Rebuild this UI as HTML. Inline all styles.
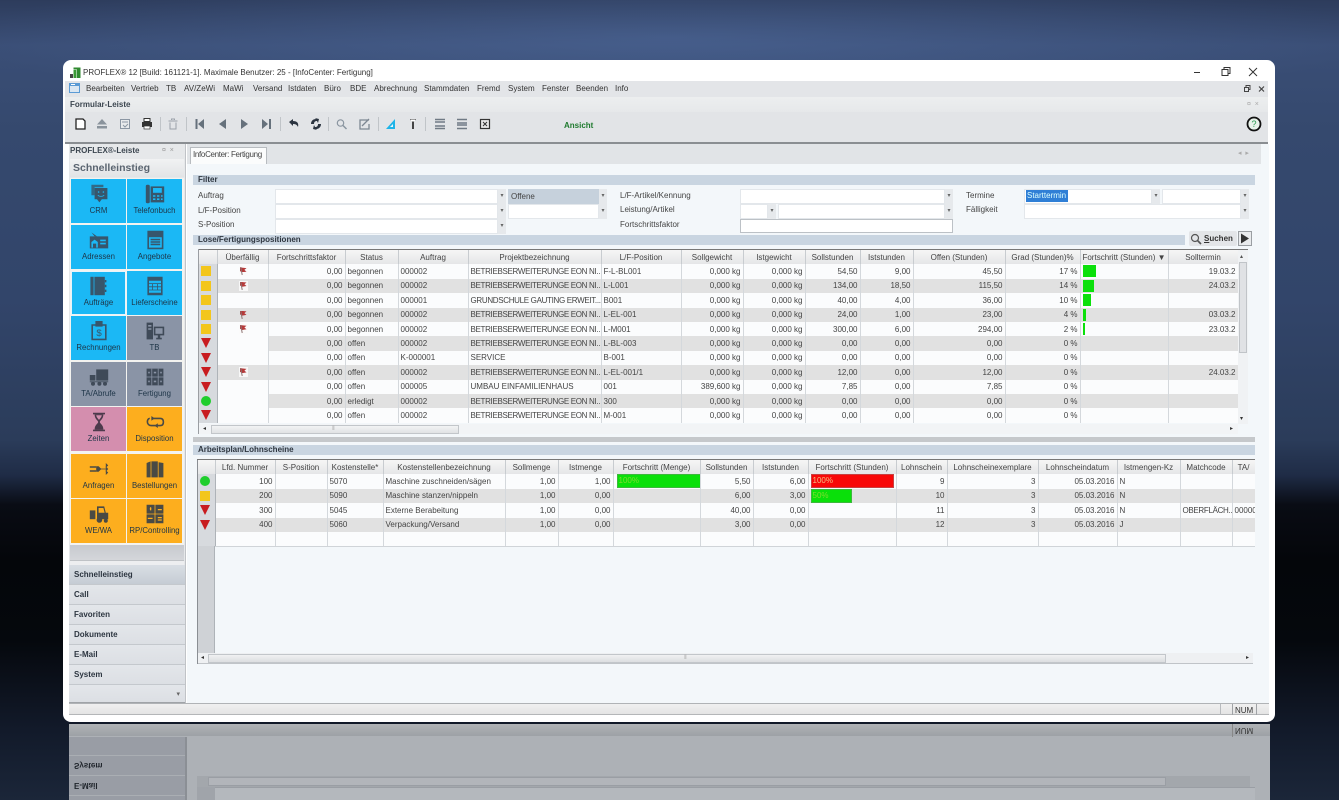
<!DOCTYPE html>
<html lang="de"><head><meta charset="utf-8"><title>PROFLEX InfoCenter</title>
<style>
*{box-sizing:border-box}
html,body{margin:0;padding:0;width:1339px;height:800px;overflow:hidden}
html{background:#05080d}
body{position:relative;font-family:"Liberation Sans",sans-serif;font-size:8px;color:#333;
background:radial-gradient(ellipse 720px 70px at 50% 38px,rgba(90,120,175,.38),rgba(90,120,175,0)),linear-gradient(180deg,#2d3c5c 0,#3a4e76 45px,#35496e 130px,#32456a 300px,#2b3c5a 440px,#1f2c46 475px,#090c14 505px,#04060a 560px,#05080d 640px,#121a2a 730px,#1b2639 800px)}
#all{position:absolute;left:0;top:0;width:1339px;height:800px;overflow:hidden;filter:blur(.35px)}
.a{position:absolute}
.t{position:absolute;white-space:nowrap;line-height:10px}
#win{position:absolute;left:63px;top:60px;width:1212px;height:662px;background:#fff;border-radius:8px;overflow:hidden}
.bar{position:absolute;background:#c9d5e1;height:10px}
.lb{position:absolute;color:#444;font-size:8px;line-height:10px;white-space:nowrap}
.f{position:absolute;background:#fff;border:1px solid #e3e7eb;height:15px;font-size:8px;line-height:13px;padding-left:2px;color:#444}
.dd{position:absolute;width:8px;height:15px;background:#e6e9ec;color:#666;font-size:6px;line-height:14px;text-align:center}
.tile{position:absolute;width:55px;height:44px;text-align:center;font-size:7.8px;color:#1d3447;line-height:9px}
.tile svg{position:absolute;left:17.5px;top:5px;width:20px;height:20px}
.tile span{position:absolute;left:-2px;right:-2px;top:27px;white-space:nowrap}
.c{background:#1bb8f5}.g{background:#8a94a6}.p{background:#d48eae}.o{background:#fdae1e}
.nav{position:absolute;left:69px;width:116px;height:20px;background:linear-gradient(#e3e6ea,#dcdfe4);border-bottom:1px solid #c4c8cd;font-weight:bold;font-size:8px;line-height:19px;padding-left:5px;color:#2c3540}
table{position:absolute;border-collapse:collapse;table-layout:fixed;font-size:8px;color:#444}
td,th{padding:0 2px;overflow:hidden;white-space:nowrap;border-right:1px solid #d4d8dc;height:14.4px;line-height:13px;font-weight:normal}
th{background:linear-gradient(#f6f6f6,#e5e6e8);color:#444;text-align:center;border-right:1px solid #c8ccd0;padding:0 1px}
tr.x td{background:#e1e1e1}
tr.y td{background:#fbfcfd}
td.r{text-align:right}
td.h,tr.x td.h,tr.y td.h{background:#d7dade;padding:0;position:relative;border-right:1px solid #aeb3b8}
td.pb,th.pb{position:relative}
.sq,.ci,.tr{position:absolute;left:2px;top:2px}
.sq{width:10px;height:10px;background:#f3c61c}
.ci{width:10px;height:10px;background:#1fce2d;border-radius:50%}
.tr{width:0;height:0;border-left:5px solid transparent;border-right:5px solid transparent;border-top:10px solid #c81c20}
.fl{position:absolute;left:21px;top:2px;width:9px;height:10px;background:rgba(250,250,250,.85)}
.fl i{position:absolute;left:1px;top:1px;width:7px;height:5px;background:#b53a3a;clip-path:polygon(0 0,100% 15%,70% 50%,100% 85%,40% 100%,0 70%)}
.fl b{position:absolute;left:2px;top:1px;width:1px;height:8px;background:#8a7070;transform:rotate(-10deg)}
tr.w0 td.ue{background:#fbfcfd}
.gb{position:absolute;left:2px;top:1px;height:12px;background:#0be00b}
.vbg{position:absolute;top:0;height:14px;background:#0ae00a;border:1px solid #3cb83c;color:#7fdc30;padding-left:1px;line-height:12px;font-size:8px}
.n{letter-spacing:-.32px}
</style></head><body><div id="all">

<!-- reflection -->
<div class="a" style="left:69px;top:724px;width:1201px;height:76px;background:#adb1b6"></div>
<div class="a" style="left:69px;top:724px;width:1201px;height:12px;background:linear-gradient(#b0b3b6,#9da1a6)"></div>
<div class="a" style="left:69px;top:737px;width:116px;height:63px;background:#999da5"></div>
<div class="a" style="left:185px;top:737px;width:2px;height:63px;background:#8b8f95"></div>
<div class="a" style="left:69px;top:755px;width:116px;height:1px;background:#aaaeb3"></div>
<div class="a" style="left:69px;top:775px;width:116px;height:1px;background:#aaaeb3"></div>
<div class="a" style="left:69px;top:795px;width:116px;height:1px;background:#aaaeb3"></div>
<div class="t" style="left:74px;top:760px;font-weight:bold;color:#20252c;transform:scaleY(-1)">System</div>
<div class="t" style="left:74px;top:780px;font-weight:bold;color:#20252c;transform:scaleY(-1)">E-Mail</div>
<div class="t" style="left:1235px;top:725px;color:#333;transform:scaleY(-1)">NUM</div>
<div class="a" style="left:1232px;top:724px;width:1px;height:13px;background:#888"></div>
<div class="a" style="left:197px;top:776px;width:1053px;height:11px;background:#a3a7ac"></div>
<div class="a" style="left:208px;top:777px;width:958px;height:9px;background:#b2b5ba;border:1px solid #9a9ea4"></div>
<div class="a" style="left:197px;top:787px;width:18px;height:13px;background:#a0a4aa"></div>
<div class="a" style="left:215px;top:787px;width:1040px;height:13px;background:#b4b8bd;border-top:1px solid #9a9ea4"></div>

<div id="win"></div>
<!-- title -->
<svg class="a" style="left:70px;top:67px" width="11" height="11" viewBox="0 0 11 11"><rect x="0" y="7" width="3" height="4" fill="#444"/><rect x="3.5" y="3" width="3" height="8" fill="#3a9a35"/><rect x="7" y="0.5" width="3.5" height="10.5" fill="#2f8a2f"/><rect x="3.5" y="0.5" width="7" height="2" fill="#2f8a2f"/></svg>
<div class="t" style="left:83px;top:68px;color:#333">PROFLEX® 12 [Build: 161121-1]. Maximale Benutzer: 25 - [InfoCenter: Fertigung]</div>
<svg class="a" style="left:1191px;top:66px" width="72" height="12" viewBox="0 0 72 12" fill="none" stroke="#333" stroke-width="1"><path d="M3 6.5h6"/><rect x="31" y="3.5" width="6" height="6"/><path d="M33 3.5V1.5h6v6h-2"/><path d="M58 2l8 8M66 2l-8 8"/></svg>
<!-- menu -->
<div class="a" style="left:65px;top:81px;width:1203px;height:16px;background:#e3e5e8"></div>
<svg class="a" style="left:69px;top:83px" width="11" height="10"><rect width="11" height="10" fill="#5b9bd5"/><rect x="1" y="3" width="9" height="6" fill="#dbe7f2"/><rect x="2" y="1" width="4" height="1" fill="#fff"/></svg>
<div class="t" style="left:86px;top:84px">Bearbeiten</div><div class="t" style="left:131px;top:84px">Vertrieb</div><div class="t" style="left:166px;top:84px">TB</div><div class="t" style="left:184px;top:84px">AV/ZeWi</div><div class="t" style="left:223px;top:84px">MaWi</div><div class="t" style="left:253px;top:84px">Versand</div><div class="t" style="left:288px;top:84px">Istdaten</div><div class="t" style="left:324px;top:84px">Büro</div><div class="t" style="left:350px;top:84px">BDE</div><div class="t" style="left:374px;top:84px">Abrechnung</div><div class="t" style="left:424px;top:84px">Stammdaten</div><div class="t" style="left:477px;top:84px">Fremd</div><div class="t" style="left:508px;top:84px">System</div><div class="t" style="left:542px;top:84px">Fenster</div><div class="t" style="left:576px;top:84px">Beenden</div><div class="t" style="left:615px;top:84px">Info</div>
<svg class="a" style="left:1242px;top:84px" width="24" height="10" fill="none" stroke="#444"><rect x="2.5" y="3.5" width="4" height="4"/><path d="M4 3.5V1.5h4v4H6.500"/><path d="M17 2.500l5 5M22 2.500l-5 5" stroke-width="1.200"/></svg>
<!-- formular -->
<div class="a" style="left:65px;top:97px;width:1203px;height:15px;background:linear-gradient(#eceeef,#e6e8ea)"></div>
<div class="t" style="left:70px;top:100px;font-weight:bold;color:#3c4650">Formular-Leiste</div>
<div class="t" style="left:1247px;top:100px;color:#aaa;font-size:7px">¤ &nbsp;×</div>
<!-- toolbar -->
<div class="a" style="left:65px;top:112px;width:1203px;height:30px;background:#e2e4e7"></div>
<div class="a" style="left:65px;top:142px;width:1203px;height:2px;background:#8a8e92"></div>
<svg class="a" style="left:63px;top:112px" width="520" height="28" viewBox="63 112 520 28">
<path d="M76 119h7l2 2v8h-9z" fill="#fff" stroke="#222" stroke-width="1.300"/>
<path d="M102 119l5 5.500H97z" fill="#8a939c"/><rect x="97" y="126" width="10" height="2.500" fill="#8a939c"/>
<rect x="120.500" y="119.500" width="9" height="9" fill="#e8eaec" stroke="#8b96a3"/><path d="M122 122h6M123 125l2 2 3-3" stroke="#8b96a3" fill="none"/>
<path d="M144 118.500h6v3h-6z" fill="#fff" stroke="#333"/><rect x="142" y="122" width="10" height="5" fill="#333"/><rect x="144" y="126" width="6" height="3" fill="#fff" stroke="#333" stroke-width=".7"/>
<path d="M168.500 121h9M170 122.500v6.500h6v-6.500M171.500 120v-1h3v1" fill="none" stroke="#9aa1a8"/>
<path d="M196.500 119v10" stroke="#66717c" stroke-width="2"/><path d="M204 119v10l-6-5z" fill="#66717c"/>
<path d="M226 119v10l-7-5z" fill="#66717c"/><path d="M241 119v10l7-5z" fill="#66717c"/>
<path d="M262 119v10l6-5z" fill="#66717c"/><path d="M270 119v10" stroke="#66717c" stroke-width="2"/>
<path d="M289 122l4-3v2c4 0 6 2 5 6-1-2-2-3-5-3v2z" fill="#2b3440"/>
<path d="M311 124c0-3 2-5 5-5l-1-1 4 1-1 4-1-2c-2 0-3 1-3 3zM321 124c0 3-2 5-5 5l1 1-4-1 1-4 1 2c2 0 3-1 3-3z" fill="#2b3440"/>
<circle cx="340.500" cy="123" r="3.200" fill="none" stroke="#8a95a0" stroke-width="1.200"/><path d="M343 125.500l3.500 3.500" stroke="#8a95a0" stroke-width="1.500"/>
<path d="M369 120h-9v9h9v-5M362 126l7-7" fill="none" stroke="#7d8792" stroke-width="1.300"/>
<path d="M386 129l9-10v10z" fill="#1eb4e8"/><path d="M390 127l3-3v3z" fill="#e8f6fb"/>
<path d="M410 119h6l-2 3v7h-2v-7z" fill="#444"/><rect x="411" y="119.500" width="4" height="2" fill="#fff"/>
<path d="M435 119.500h10M435 122h10M435 126h10M435 128.500h10" stroke="#707a85" stroke-width="1.400"/>
<path d="M457 119.500h10M457 123h10M457 125h10M457 128.500h10" stroke="#707a85" stroke-width="1.400"/>
<rect x="480.500" y="119.500" width="9" height="9" fill="#e8e8e8" stroke="#333" stroke-width="1.200"/><path d="M483 122l4 4M487 122l-4 4" stroke="#333"/>
<path d="M160.500 117v14M186.500 117v14M280.500 117v14M328.500 117v14M378.500 117v14M425.500 117v14" stroke="#c0c4c8"/>
</svg>
<div class="t" style="left:564px;top:121px;font-weight:bold;color:#1e7a2e">Ansicht</div>
<svg class="a" style="left:1246px;top:116px" width="16" height="16"><circle cx="8" cy="8" r="6.500" fill="#e8f2ea" stroke="#111" stroke-width="1.800"/><text x="8" y="11" font-size="9" text-anchor="middle" fill="#2a9a50" font-family="Liberation Sans">?</text></svg>

<!-- sidebar -->
<div class="a" style="left:69px;top:144px;width:116px;height:559px;background:#e6e8ea"></div>
<div class="t" style="left:70px;top:146px;font-weight:bold;color:#3c4650">PROFLEX®-Leiste</div>
<div class="t" style="left:162px;top:146px;color:#999;font-size:7px">¤ &nbsp;×</div>
<div class="a" style="left:70px;top:159px;width:114px;height:18px;background:linear-gradient(#f1f2f3,#e2e4e6);font-weight:bold;font-size:10.500px;line-height:18px;padding-left:3px;color:#5a6470">Schnelleinstieg</div>
<div class="a" style="left:70px;top:178px;width:114px;height:367px;background:#f3f3f0"></div>

<div class="tile c" style="left:71px;top:179px"><svg viewBox="0 0 25 25" fill="#37566c"><path d="M3 1h15v3H7v10H3z" opacity=".8"/><path d="M7 5h16v14h-7l-3 4-3-4H7z"/><circle cx="12" cy="10" r="1" fill="#1bb8f5"/><circle cx="18" cy="10" r="1" fill="#1bb8f5"/><path d="M11 14c2 2 6 2 8 0" stroke="#1bb8f5" fill="none"/></svg><span>CRM</span></div>
<div class="tile c" style="left:127px;top:179px"><svg viewBox="0 0 25 25" fill="#37566c"><rect x="1" y="1" width="5" height="23" rx="2"/><rect x="7" y="3" width="17" height="20"/><rect x="10" y="5" width="11" height="6" fill="#1bb8f5"/><path d="M10 14h3v2h-3zM15 14h3v2h-3zM20 14h2v2h-2zM10 18h3v2h-3zM15 18h3v2h-3zM20 18h2v2h-2z" fill="#1bb8f5"/></svg><span>Telefonbuch</span></div>
<div class="tile c" style="left:71px;top:225px"><svg viewBox="0 0 25 25" fill="#37566c"><path d="M1 8h23v15H1z"/><path d="M3 3l7 5H7z"/><path d="M3 22v-7l4-3 4 3v7H9v-5H5v5z" fill="#1bb8f5"/><path d="M14 12h7v2h-7zM14 16h7v2h-7z" fill="#1bb8f5"/></svg><span>Adressen</span></div>
<div class="tile c" style="left:127px;top:225px"><svg viewBox="0 0 25 25" fill="none" stroke="#37566c" stroke-width="2"><path d="M4 2h18v21H4z"/><path d="M5 3h16v5H5z" fill="#37566c"/><path d="M7 12h12M7 15h12M7 18h12"/></svg><span>Angebote</span></div>
<div class="tile c" style="left:71px;top:271px;border:1.500px solid #e8f4fb"><svg viewBox="0 0 25 25" fill="#37566c" style="left:16px;top:3.500px"><rect x="3" y="1" width="4" height="23"/><rect x="8" y="1" width="13" height="23"/><path d="M21 5h2v3h-2zM21 11h2v3h-2zM21 17h2v3h-2z"/></svg><span style="top:25.500px">Aufträge</span></div>
<div class="tile c" style="left:127px;top:271px"><svg viewBox="0 0 25 25" fill="#37566c"><path d="M3 1h19v23H3z"/><path d="M5 6h15v3H5zM5 10h4v3H5zM10 10h5v3h-5zM16 10h4v3h-4zM5 14h4v3H5zM10 14h5v3h-5zM16 14h4v3h-4zM5 18h15v3H5z" fill="#1bb8f5"/></svg><span>Lieferscheine</span></div>
<div class="tile c" style="left:71px;top:316px"><svg viewBox="0 0 25 25" fill="none" stroke="#37566c" stroke-width="2"><path d="M4 5h17v18H4z"/><rect x="9" y="1" width="7" height="5" fill="#37566c"/><text x="12.500" y="19" font-size="12" stroke="none" fill="#37566c" text-anchor="middle" font-family="Liberation Sans">$</text></svg><span>Rechnungen</span></div>
<div class="tile g" style="left:127px;top:316px"><svg viewBox="0 0 25 25" fill="#3f4a58"><path d="M2 2h8v21H2z"/><path d="M4 5h4v2H4zM4 9h4v2H4z" fill="#8a94a6"/><path d="M11 7h13v11h-5v3h2v2h-7v-2h2v-3h-5z"/><path d="M13 9h9v7h-9z" fill="#8a94a6"/></svg><span>TB</span></div>
<div class="tile g" style="left:71px;top:362px"><svg viewBox="0 0 25 25" fill="#3f4a58"><path d="M9 3h15v14H9z"/><path d="M1 10h7v7H1z"/><path d="M1 18h23v1H1z"/><circle cx="5" cy="21" r="2.500"/><circle cx="13" cy="21" r="2.500"/><circle cx="20" cy="21" r="2.500"/></svg><span>TA/Abrufe</span></div>
<div class="tile g" style="left:127px;top:362px"><svg viewBox="0 0 25 25" fill="#3f4a58"><path d="M2 2h21v21H2z"/><path d="M8 2h1v21H8zM16 2h1v21h-1zM2 12h21v1H2z" fill="#8a94a6"/><path d="M4 6h2v2H4zM11 6h3v2h-3zM19 6h2v2h-2zM4 17h2v2H4zM11 17h3v2h-3zM19 17h2v2h-2z" fill="#8a94a6"/></svg><span>Fertigung</span></div>
<div class="tile p" style="left:71px;top:407px"><svg viewBox="0 0 25 25" fill="#4d3a4c"><path d="M5 1h15v2H5zM5 22h15v2H5z"/><path d="M7 3h11c0 6-4 7-4.500 9.500C14 15 18 16 18 22H7c0-6 4-7 4.500-9.500C11 10 7 9 7 3z"/><path d="M9 4h7c-.5 3-2.500 4-3.500 6-1-2-3-3-3.500-6z" fill="#d48eae"/></svg><span>Zeiten</span></div>
<div class="tile o" style="left:127px;top:407px"><svg viewBox="0 0 25 25" fill="none" stroke="#4a4a44" stroke-width="2"><path d="M8 8h11c3 0 4 2 4 4.500S22 17 19 17h-3M17 17h-9c-3 0-5-2-5-4.500S4 8 6 8"/><path d="M8 5l4 3-4 3zM16 14l-4 3 4 3z" fill="#4a4a44" stroke="none"/></svg><span>Disposition</span></div>
<div class="tile o" style="left:71px;top:454px"><svg viewBox="0 0 25 25" fill="#4a4a44"><path d="M1 9h8v2H1zM1 14h8v2H1z"/><path d="M9 9h3l3 3h6V9l3 3.500-3 3.500v-3h-6l-3 3H9z"/><path d="M21 5l3 3-3 3zM21 14l3 3-3 3z"/></svg><span>Anfragen</span></div>
<div class="tile o" style="left:127px;top:454px"><svg viewBox="0 0 25 25" fill="#4a4a44"><path d="M2 5l5-2v20H2zM8 3h8v20H8zM17 4l6 1v18h-6z"/></svg><span>Bestellungen</span></div>
<div class="tile o" style="left:71px;top:499px"><svg viewBox="0 0 25 25" fill="#4a4a44"><path d="M1 8h7v11H1z"/><path d="M10 3h9l2 8h3v8H10z"/><path d="M12 5h6l1.500 6H12z" fill="#fdae1e"/><circle cx="13" cy="20" r="3.500"/><circle cx="21" cy="21" r="2.500"/></svg><span>WE/WA</span></div>
<div class="tile o" style="left:127px;top:499px"><svg viewBox="0 0 25 25" fill="#4a4a44"><path d="M2 1h10v11H2zM13 1h10v11H13zM2 13h10v11H2zM13 13h10v11H13z"/><path d="M6 6h2M7 4v4M3.500 18h6M16 7h5M16 17h5M16 20h5" stroke="#fdae1e" stroke-width="1.500"/></svg><span>RP/Controlling</span></div>

<div class="a" style="left:70px;top:545px;width:114px;height:15px;background:linear-gradient(#c7cacf,#d4d6da)"></div>
<div class="a" style="left:70px;top:560px;width:114px;height:5px;background:#edeef0;border-top:1px solid #bfc2c6"></div>
<div class="nav" style="top:565px;background:linear-gradient(#d9dee4,#c5ccd4)">Schnelleinstieg</div>
<div class="nav" style="top:585px">Call</div>
<div class="nav" style="top:605px">Favoriten</div>
<div class="nav" style="top:625px">Dokumente</div>
<div class="nav" style="top:645px">E-Mail</div>
<div class="nav" style="top:665px">System</div>
<div class="nav" style="top:685px;height:18px;text-align:right;padding-right:5px;font-weight:normal;color:#666;font-size:7px;border-bottom:1px solid #a0a4a8">▾</div>
<div class="a" style="left:185px;top:144px;width:1px;height:559px;background:#c0c3c7"></div>

<!-- main -->
<div class="a" style="left:187px;top:144px;width:1082px;height:559px;background:#f3f7fa"></div>
<div class="a" style="left:187px;top:144px;width:1074px;height:20px;background:#e1e4e7"></div>
<div class="a n" style="left:190px;top:147px;width:77px;height:17px;background:#fbfcfc;border:1px solid #b8bcc0;border-bottom:0;font-size:8px;line-height:14px;padding-left:2px;color:#444;white-space:nowrap;overflow:hidden">InfoCenter: Fertigung</div>
<div class="t" style="left:1238px;top:149px;color:#aaa;font-size:7px">◂ &nbsp;▸</div>

<div class="bar" style="left:193px;top:175px;width:1062px"></div>
<div class="t" style="left:198px;top:175px;font-weight:bold;color:#2e3640">Filter</div>

<div class="lb" style="left:198px;top:191px">Auftrag</div>
<div class="lb" style="left:198px;top:206px">L/F-Position</div>
<div class="lb" style="left:198px;top:220px">S-Position</div>
<div class="f" style="left:275px;top:189px;width:223px"></div><div class="dd" style="left:498px;top:189px">▾</div>
<div class="f" style="left:275px;top:204px;width:223px"></div><div class="dd" style="left:498px;top:204px">▾</div>
<div class="f" style="left:275px;top:219px;width:223px"></div><div class="dd" style="left:498px;top:219px">▾</div>
<div class="f" style="left:508px;top:189px;width:91px;background:#c6d1dc;border:0;line-height:15px;padding-left:3px">Offene</div><div class="dd" style="left:599px;top:189px">▾</div>
<div class="f" style="left:508px;top:204px;width:91px"></div><div class="dd" style="left:599px;top:204px">▾</div>

<div class="lb" style="left:620px;top:191px">L/F-Artikel/Kennung</div>
<div class="lb" style="left:620px;top:205px">Leistung/Artikel</div>
<div class="lb" style="left:620px;top:220px">Fortschrittsfaktor</div>
<div class="f" style="left:740px;top:189px;width:205px"></div><div class="dd" style="left:945px;top:189px">▾</div>
<div class="f" style="left:740px;top:204px;width:28px"></div><div class="dd" style="left:768px;top:204px">▾</div>
<div class="f" style="left:778px;top:204px;width:167px"></div><div class="dd" style="left:945px;top:204px">▾</div>
<div class="f" style="left:740px;top:219px;width:213px;height:14px;border-color:#bcc1c6"></div>

<div class="lb" style="left:966px;top:191px">Termine</div>
<div class="lb" style="left:966px;top:205px">Fälligkeit</div>
<div class="f" style="left:1024px;top:189px;width:128px;padding:0"></div><div class="dd" style="left:1152px;top:189px">▾</div>
<div class="a" style="left:1026px;top:190px;width:42px;height:12px;background:#2f7fd6;color:#dff;font-size:8px;line-height:12px;white-space:nowrap;padding-left:1px">Starttermin</div>
<div class="f" style="left:1162px;top:189px;width:79px"></div><div class="dd" style="left:1241px;top:189px">▾</div>
<div class="f" style="left:1024px;top:204px;width:217px"></div><div class="dd" style="left:1241px;top:204px">▾</div>

<div class="bar" style="left:193px;top:235px;width:992px"></div>
<div class="t" style="left:198px;top:235px;font-weight:bold;color:#2e3640">Lose/Fertigungspositionen</div>
<div class="a" style="left:1189px;top:231px;width:48px;height:15px;background:#e3e5e8;border-radius:2px;font-weight:bold;font-size:8px;line-height:15px;padding-left:15px;color:#333"><u>S</u>uchen</div>
<svg class="a" style="left:1190px;top:233px" width="12" height="12" fill="none" stroke="#555" stroke-width="1.200"><circle cx="5" cy="5" r="3.500"/><path d="M7.500 7.500l3.500 3.500" stroke-width="1.600"/></svg>
<div class="a" style="left:1238px;top:231px;width:14px;height:15px;background:#e9ebed;border:1px solid #9a9ea2"></div>
<svg class="a" style="left:1238px;top:231px" width="14" height="15"><path d="M3 2.500l8 5-8 5z" fill="#333"/></svg>

<!-- upper grid -->
<div class="a" style="left:199px;top:249px;width:1049px;height:1px;background:#777"></div>
<div class="a" style="left:198px;top:249px;width:1px;height:185px;background:#9a9ea3"></div>
<table style="left:199px;top:250px;width:1039px">
<colgroup><col style="width:18px"><col style="width:51px"><col style="width:77px"><col style="width:53px"><col style="width:70px"><col style="width:133px"><col style="width:80px"><col style="width:62px"><col style="width:62px"><col style="width:55px"><col style="width:53px"><col style="width:92px"><col style="width:75px"><col style="width:88px"><col style="width:70px"></colgroup>
<tr><th></th><th>Überfällig</th><th>Fortschrittsfaktor</th><th>Status</th><th>Auftrag</th><th>Projektbezeichnung</th><th>L/F-Position</th><th>Sollgewicht</th><th>Istgewicht</th><th>Sollstunden</th><th>Iststunden</th><th>Offen (Stunden)</th><th>Grad (Stunden)%</th><th>Fortschritt (Stunden) ▼</th><th>Solltermin</th></tr>
<tr class="y"><td class="h"><div class="sq"></div></td><td class="pb ue"><div class="fl"><i></i><b></b></div></td><td class="r">0,00</td><td>begonnen</td><td>000002</td><td class="n">BETRIEBSERWEITERUNGE EON NI...</td><td>F-L-BL001</td><td class="r">0,000 kg</td><td class="r">0,000 kg</td><td class="r">54,50</td><td class="r">9,00</td><td class="r">45,50</td><td class="r">17 %</td><td class="pb"><div class="gb" style="width:13px"></div></td><td class="r">19.03.2</td></tr>
<tr class="x"><td class="h"><div class="sq"></div></td><td class="pb ue"><div class="fl"><i></i><b></b></div></td><td class="r">0,00</td><td>begonnen</td><td>000002</td><td class="n">BETRIEBSERWEITERUNGE EON NI...</td><td>L-L001</td><td class="r">0,000 kg</td><td class="r">0,000 kg</td><td class="r">134,00</td><td class="r">18,50</td><td class="r">115,50</td><td class="r">14 %</td><td class="pb"><div class="gb" style="width:11px"></div></td><td class="r">24.03.2</td></tr>
<tr class="y"><td class="h"><div class="sq"></div></td><td></td><td class="r">0,00</td><td>begonnen</td><td>000001</td><td class="n">GRUNDSCHULE GAUTING ERWEIT...</td><td>B001</td><td class="r">0,000 kg</td><td class="r">0,000 kg</td><td class="r">40,00</td><td class="r">4,00</td><td class="r">36,00</td><td class="r">10 %</td><td class="pb"><div class="gb" style="width:8px"></div></td><td></td></tr>
<tr class="x"><td class="h"><div class="sq"></div></td><td class="pb"><div class="fl" style="background:none"><i></i><b></b></div></td><td class="r">0,00</td><td>begonnen</td><td>000002</td><td class="n">BETRIEBSERWEITERUNGE EON NI...</td><td>L-EL-001</td><td class="r">0,000 kg</td><td class="r">0,000 kg</td><td class="r">24,00</td><td class="r">1,00</td><td class="r">23,00</td><td class="r">4 %</td><td class="pb"><div class="gb" style="width:3px"></div></td><td class="r">03.03.2</td></tr>
<tr class="y"><td class="h"><div class="sq"></div></td><td class="pb"><div class="fl"><i></i><b></b></div></td><td class="r">0,00</td><td>begonnen</td><td>000002</td><td class="n">BETRIEBSERWEITERUNGE EON NI...</td><td>L-M001</td><td class="r">0,000 kg</td><td class="r">0,000 kg</td><td class="r">300,00</td><td class="r">6,00</td><td class="r">294,00</td><td class="r">2 %</td><td class="pb"><div class="gb" style="width:2px"></div></td><td class="r">23.03.2</td></tr>
<tr class="x w0"><td class="h"><div class="tr"></div></td><td class="ue"></td><td class="r">0,00</td><td>offen</td><td>000002</td><td class="n">BETRIEBSERWEITERUNGE EON NI...</td><td>L-BL-003</td><td class="r">0,000 kg</td><td class="r">0,000 kg</td><td class="r">0,00</td><td class="r">0,00</td><td class="r">0,00</td><td class="r">0 %</td><td></td><td></td></tr>
<tr class="y"><td class="h"><div class="tr"></div></td><td></td><td class="r">0,00</td><td>offen</td><td>K-000001</td><td>SERVICE</td><td>B-001</td><td class="r">0,000 kg</td><td class="r">0,000 kg</td><td class="r">0,00</td><td class="r">0,00</td><td class="r">0,00</td><td class="r">0 %</td><td></td><td></td></tr>
<tr class="x"><td class="h"><div class="tr"></div></td><td class="pb"><div class="fl"><i></i><b></b></div></td><td class="r">0,00</td><td>offen</td><td>000002</td><td class="n">BETRIEBSERWEITERUNGE EON NI...</td><td>L-EL-001/1</td><td class="r">0,000 kg</td><td class="r">0,000 kg</td><td class="r">12,00</td><td class="r">0,00</td><td class="r">12,00</td><td class="r">0 %</td><td></td><td class="r">24.03.2</td></tr>
<tr class="y"><td class="h"><div class="tr"></div></td><td></td><td class="r">0,00</td><td>offen</td><td>000005</td><td>UMBAU EINFAMILIENHAUS</td><td>001</td><td class="r">389,600 kg</td><td class="r">0,000 kg</td><td class="r">7,85</td><td class="r">0,00</td><td class="r">7,85</td><td class="r">0 %</td><td></td><td></td></tr>
<tr class="x w0"><td class="h"><div class="ci"></div></td><td class="ue"></td><td class="r">0,00</td><td>erledigt</td><td>000002</td><td class="n">BETRIEBSERWEITERUNGE EON NI...</td><td>300</td><td class="r">0,000 kg</td><td class="r">0,000 kg</td><td class="r">0,00</td><td class="r">0,00</td><td class="r">0,00</td><td class="r">0 %</td><td></td><td></td></tr>
<tr class="y"><td class="h"><div class="tr"></div></td><td></td><td class="r">0,00</td><td>offen</td><td>000002</td><td class="n">BETRIEBSERWEITERUNGE EON NI...</td><td>M-001</td><td class="r">0,000 kg</td><td class="r">0,000 kg</td><td class="r">0,00</td><td class="r">0,00</td><td class="r">0,00</td><td class="r">0 %</td><td></td><td></td></tr>
</table>
<!-- upper scrollbars -->
<div class="a" style="left:1238px;top:250px;width:10px;height:174px;background:#f0f2f4"></div>
<div class="a" style="left:1239px;top:262px;width:8px;height:91px;background:#e0e2e5;border:1px solid #c0c4c8"></div>
<div class="t" style="left:1240px;top:252px;font-size:6px;color:#555">▴</div>
<div class="t" style="left:1240px;top:414px;font-size:6px;color:#333">▾</div>
<div class="a" style="left:199px;top:424px;width:1039px;height:10px;background:#f2f4f6"></div>
<div class="a" style="left:211px;top:425px;width:248px;height:9px;background:linear-gradient(#f2f3f4,#e0e2e4);border:1px solid #c2c6ca"></div>
<div class="t" style="left:203px;top:424px;font-size:6px;color:#333">◂</div>
<div class="t" style="left:1230px;top:424px;font-size:6px;color:#333">▸</div>

<div class="a" style="left:193px;top:437px;width:1062px;height:5px;background:#c5c8cb"></div>
<div class="bar" style="left:193px;top:445px;width:1062px"></div>
<div class="t" style="left:198px;top:445px;font-weight:bold;color:#2e3640">Arbeitsplan/Lohnscheine</div>

<!-- lower grid -->
<div class="a" style="left:197px;top:459px;width:1058px;height:1px;background:#777"></div>
<div class="a" style="left:197px;top:460px;width:1px;height:204px;background:#8a8e93"></div>
<div class="a" style="left:198px;top:546px;width:17px;height:107px;background:#cfd2d6;border-right:1px solid #aeb3b8"></div>
<div class="a" style="overflow:hidden;left:198px;top:460px;width:1057px;height:87px">
<table style="left:0;top:0;width:1057px">
<colgroup><col style="width:17px"><col style="width:60px"><col style="width:52px"><col style="width:56px"><col style="width:122px"><col style="width:53px"><col style="width:55px"><col style="width:87px"><col style="width:53px"><col style="width:55px"><col style="width:88px"><col style="width:51px"><col style="width:91px"><col style="width:79px"><col style="width:63px"><col style="width:52px"><col style="width:23px"></colgroup>
<tr><th></th><th>Lfd. Nummer</th><th>S-Position</th><th>Kostenstelle*</th><th>Kostenstellenbezeichnung</th><th>Sollmenge</th><th>Istmenge</th><th>Fortschritt (Menge)</th><th>Sollstunden</th><th>Iststunden</th><th>Fortschritt (Stunden)</th><th>Lohnschein</th><th>Lohnscheinexemplare</th><th>Lohnscheindatum</th><th>Istmengen-Kz</th><th>Matchcode</th><th>TA/</th></tr>
<tr class="y"><td class="h"><div class="ci"></div></td><td class="r">100</td><td></td><td>5070</td><td>Maschine zuschneiden/sägen</td><td class="r">1,00</td><td class="r">1,00</td><td class="pb"><div class="vbg" style="left:3px;width:84px">100%</div></td><td class="r">5,50</td><td class="r">6,00</td><td class="pb"><div class="vbg" style="left:2px;width:83px;background:#f80808;border-color:#c84040;color:#f4c080">100%</div></td><td class="r">9</td><td class="r">3</td><td class="r">05.03.2016</td><td>N</td><td></td><td></td></tr>
<tr class="x"><td class="h"><div class="sq"></div></td><td class="r">200</td><td></td><td>5090</td><td>Maschine stanzen/nippeln</td><td class="r">1,00</td><td class="r">0,00</td><td></td><td class="r">6,00</td><td class="r">3,00</td><td class="pb"><div class="vbg" style="left:2px;width:41px">50%</div></td><td class="r">10</td><td class="r">3</td><td class="r">05.03.2016</td><td>N</td><td></td><td></td></tr>
<tr class="y"><td class="h"><div class="tr"></div></td><td class="r">300</td><td></td><td>5045</td><td>Externe Berabeitung</td><td class="r">1,00</td><td class="r">0,00</td><td></td><td class="r">40,00</td><td class="r">0,00</td><td></td><td class="r">11</td><td class="r">3</td><td class="r">05.03.2016</td><td>N</td><td class="n">OBERFLÄCH...</td><td>00000</td></tr>
<tr class="x"><td class="h"><div class="tr"></div></td><td class="r">400</td><td></td><td>5060</td><td>Verpackung/Versand</td><td class="r">1,00</td><td class="r">0,00</td><td></td><td class="r">3,00</td><td class="r">0,00</td><td></td><td class="r">12</td><td class="r">3</td><td class="r">05.03.2016</td><td>J</td><td></td><td></td></tr>
<tr class="y"><td class="h"></td><td></td><td></td><td></td><td></td><td></td><td></td><td></td><td></td><td></td><td></td><td></td><td></td><td></td><td></td><td></td><td></td></tr>
</table></div>
<div class="a" style="left:215px;top:546px;width:1040px;height:1px;background:#d0d4d8"></div>
<div class="a" style="left:198px;top:653px;width:1055px;height:11px;background:#eef0f2;border-bottom:1px solid #c0c4c8"></div>
<div class="a" style="left:208px;top:654px;width:958px;height:9px;background:linear-gradient(#f0f1f2,#dcdee0);border:1px solid #c2c6ca"></div>
<div class="t" style="left:201px;top:653px;font-size:6px;color:#333">◂</div>
<div class="t" style="left:1246px;top:653px;font-size:6px;color:#333">▸</div>
<div class="t" style="left:684px;top:653px;font-size:6px;color:#aaa">⦀</div>
<div class="t" style="left:332px;top:424px;font-size:6px;color:#aaa">⦀</div>

<!-- status -->
<div class="a" style="left:69px;top:703px;width:1200px;height:12px;background:linear-gradient(#f0f0f0,#e4e4e4);border-top:1px solid #b0b3b6;border-bottom:1px solid #b4b6b8"></div>
<div class="a" style="left:1220px;top:704px;width:1px;height:11px;background:#b8bbbe"></div>
<div class="a" style="left:1232px;top:704px;width:1px;height:11px;background:#a0a3a6"></div>
<div class="a" style="left:1256px;top:704px;width:1px;height:11px;background:#a0a3a6"></div>
<div class="t" style="left:1235px;top:706px;color:#333">NUM</div>
</div></body></html>
